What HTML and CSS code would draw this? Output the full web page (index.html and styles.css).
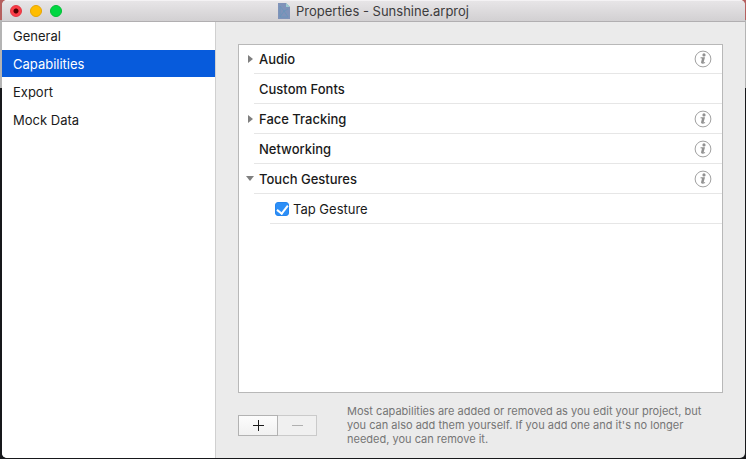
FILE: index.html
```html
<!DOCTYPE html>
<html lang="en">
<head>
    <meta charset="UTF-8">
    <meta name="viewport" content="width=device-width, initial-scale=1.0">
    <title>Properties - Sunshine.arproj</title>
    <link rel="stylesheet" href="styles.css">
</head>
<body>
    <svg width="0" height="0" class="symbols" aria-hidden="true">
        <symbol id="info" viewBox="0 0 18 18">
            <circle cx="9" cy="9" r="7.9" fill="none" stroke="#a0a0a0" stroke-width="1"/>
            <circle cx="10" cy="4.9" r="1.6" fill="#929292"/>
            <path d="M6.6 7.3h4.4l-1.4 5.2 1.6-.5-.2 1c-1.3.9-4.4 1.3-3.9-1l.9-3.5-1.5-.3z" fill="#929292"/>
        </symbol>
    </svg>

    <div class="window">
        <header class="titlebar">
            <div class="window-buttons">
                <button class="dot close" aria-label="Close"></button>
                <button class="dot minimize" aria-label="Minimize"></button>
                <button class="dot expand" aria-label="Zoom"></button>
            </div>
            <svg class="file-icon" viewBox="0 0 12 16" aria-hidden="true">
                <path d="M0 0h8l4 4v12H0z" fill="#8093b9"/>
                <path d="M8 0l4 4H8z" fill="#9ccbd0"/>
                <path d="M2 3l4 5 4-2M2 14l4-6 4 6M2 3v11h8" fill="none" stroke="#6796ba" stroke-width=".8"/>
            </svg>
            <h1>Properties - Sunshine.arproj</h1>
        </header>

        <div class="content">
            <nav class="sidebar">
                <a href="#general">General</a>
                <a href="#capabilities" class="selected">Capabilities</a>
                <a href="#export">Export</a>
                <a href="#mock-data">Mock Data</a>
            </nav>

            <main>
                <ul class="capabilities">
                    <li class="row">
                        <button class="toggle" aria-label="Expand Audio"></button>
                        <span class="name">Audio</span>
                        <button class="info" aria-label="About Audio"><svg><use href="#info"/></svg></button>
                    </li>
                    <li class="row">
                        <span class="name">Custom Fonts</span>
                    </li>
                    <li class="row">
                        <button class="toggle" aria-label="Expand Face Tracking"></button>
                        <span class="name">Face Tracking</span>
                        <button class="info" aria-label="About Face Tracking"><svg><use href="#info"/></svg></button>
                    </li>
                    <li class="row">
                        <span class="name">Networking</span>
                        <button class="info" aria-label="About Networking"><svg><use href="#info"/></svg></button>
                    </li>
                    <li class="row">
                        <button class="toggle open" aria-label="Collapse Touch Gestures"></button>
                        <span class="name">Touch Gestures</span>
                        <button class="info" aria-label="About Touch Gestures"><svg><use href="#info"/></svg></button>
                    </li>
                    <li class="row child">
                        <input type="checkbox" id="tap" checked>
                        <label for="tap">Tap Gesture</label>
                    </li>
                </ul>

                <div class="bottom">
                    <div class="edit-buttons">
                        <button aria-label="Add"><svg viewBox="0 0 12 12"><path d="M1 5.5h11M6.5 0v11"/></svg></button>
                        <button aria-label="Remove" disabled><svg viewBox="0 0 12 12"><path d="M1 5.5h11"/></svg></button>
                    </div>
                    <p>Most capabilities are added or removed as you edit your project, but you can also add them yourself. If you add one and it's no longer needed, you can remove it.</p>
                </div>
            </main>
        </div>
    </div>
</body>
</html>
```

FILE: styles.css
```css
* {
    margin: 0;
    padding: 0;
    box-sizing: border-box;
}

body {
    height: 100vh;
    padding: 0 1px 1px 2px;
    background: linear-gradient(#b5605f 0 20px, #b4b4b4 20px 88px, #17181b 88px);
    font-family: Inter, sans-serif;
    font-size: 13px;
    line-height: 16px;
    color: #1a1a1a;
}

button {
    background: none;
    border: none;
}

.symbols {
    position: absolute;
}

.window {
    display: flex;
    flex-direction: column;
    height: 100%;
    border-radius: 5px;
    overflow: hidden;
    background: #ebebeb;
}

/* Title bar */
.titlebar {
    position: relative;
    display: flex;
    justify-content: center;
    align-items: center;
    gap: 6px;
    height: 22px;
    background: linear-gradient(#f4f2f4 0 1px, #e7e5e7 1px, #d2d0d2);
    border-bottom: 1px solid #b1afb1;
}

.titlebar h1 {
    font-size: 13px;
    font-weight: 400;
    color: #3c3b3c;
}

.file-icon {
    width: 12px;
    height: 16px;
}

.window-buttons {
    position: absolute;
    left: 8px;
    display: flex;
    gap: 8px;
}

.dot {
    width: 12px;
    height: 12px;
    border-radius: 50%;
}

.close {
    background: radial-gradient(circle, #4d0000 2px, #fc3d49 3px);
    border: 1px solid #e2333f;
}

.minimize {
    background: #ffbd00;
    border: 1px solid #e5a500;
}

.expand {
    background: #00d742;
    border: 1px solid #00bd35;
}

.content {
    display: flex;
    flex: 1;
}

/* Sidebar */
.sidebar {
    width: 214px;
    background: white;
    border-right: 1px solid #d0d0d0;
}

.sidebar a {
    display: block;
    padding: 6px 11px 5px;
    margin-bottom: 1px;
    color: #1a1a1a;
    text-decoration: none;
}

.sidebar .selected {
    background: #075bdc;
    color: white;
}

/* Capabilities list */
main {
    flex: 1;
    display: flex;
    flex-direction: column;
    padding: 22px 22px 12px;
}

.capabilities {
    flex: 1;
    padding: 0 1px;
    list-style: none;
    background: white;
    box-shadow: inset 0 0 0 1px #b8b8b8;
}

.row {
    display: flex;
    align-items: center;
    position: relative;
    height: 30px;
    margin-left: 15px;
    padding: 0 10px 0 5px;
    border-bottom: 1px solid #e6e6e6;
}

.name {
    flex: 1;
    font-weight: 500;
}

.toggle {
    position: absolute;
    left: -6px;
    border-left: 5px solid #7f7f7f;
    border-top: 4px solid transparent;
    border-bottom: 4px solid transparent;
}

.toggle.open {
    left: -8px;
    border-top: 5px solid #7f7f7f;
    border-left: 4px solid transparent;
    border-right: 4px solid transparent;
    border-bottom: none;
}

.info svg {
    display: block;
    width: 18px;
    height: 18px;
}

.child {
    gap: 4px;
    margin-left: 31px;
}

.child input {
    appearance: none;
    display: grid;
    place-items: center;
    width: 14px;
    height: 14px;
    background: white;
    border: 1px solid #b8b8b8;
    border-radius: 3px;
}

.child input:checked {
    background: #2d8ff7;
    border-color: #2585ee;
}

.child input:checked::after {
    content: "";
    width: 5px;
    height: 9px;
    margin-bottom: 2px;
    border: solid white;
    border-width: 0 2px 2px 0;
    transform: rotate(38deg);
}

/* Bottom bar */
.bottom {
    display: flex;
    align-items: flex-start;
    gap: 30px;
    padding-top: 11px;
    font-size: 11px;
    line-height: 14px;
    color: #757575;
}

.bottom p {
    flex: 1;
    padding-right: 8px;
}

.edit-buttons {
    display: flex;
    margin-top: 11px;
}

.edit-buttons button {
    display: flex;
    justify-content: center;
    align-items: center;
    width: 40px;
    height: 21px;
    background: linear-gradient(#fcfcfc, #f1f1f1);
    border: 1px solid #b2b2b2;
}

.edit-buttons button:disabled {
    width: 39px;
    background: #f0f0f0;
    border-color: #cacaca;
    border-left: none;
}

.edit-buttons svg {
    width: 12px;
    height: 12px;
    stroke: #1a1a1a;
}

.edit-buttons button:disabled svg {
    stroke: #b0b0b0;
}
```
